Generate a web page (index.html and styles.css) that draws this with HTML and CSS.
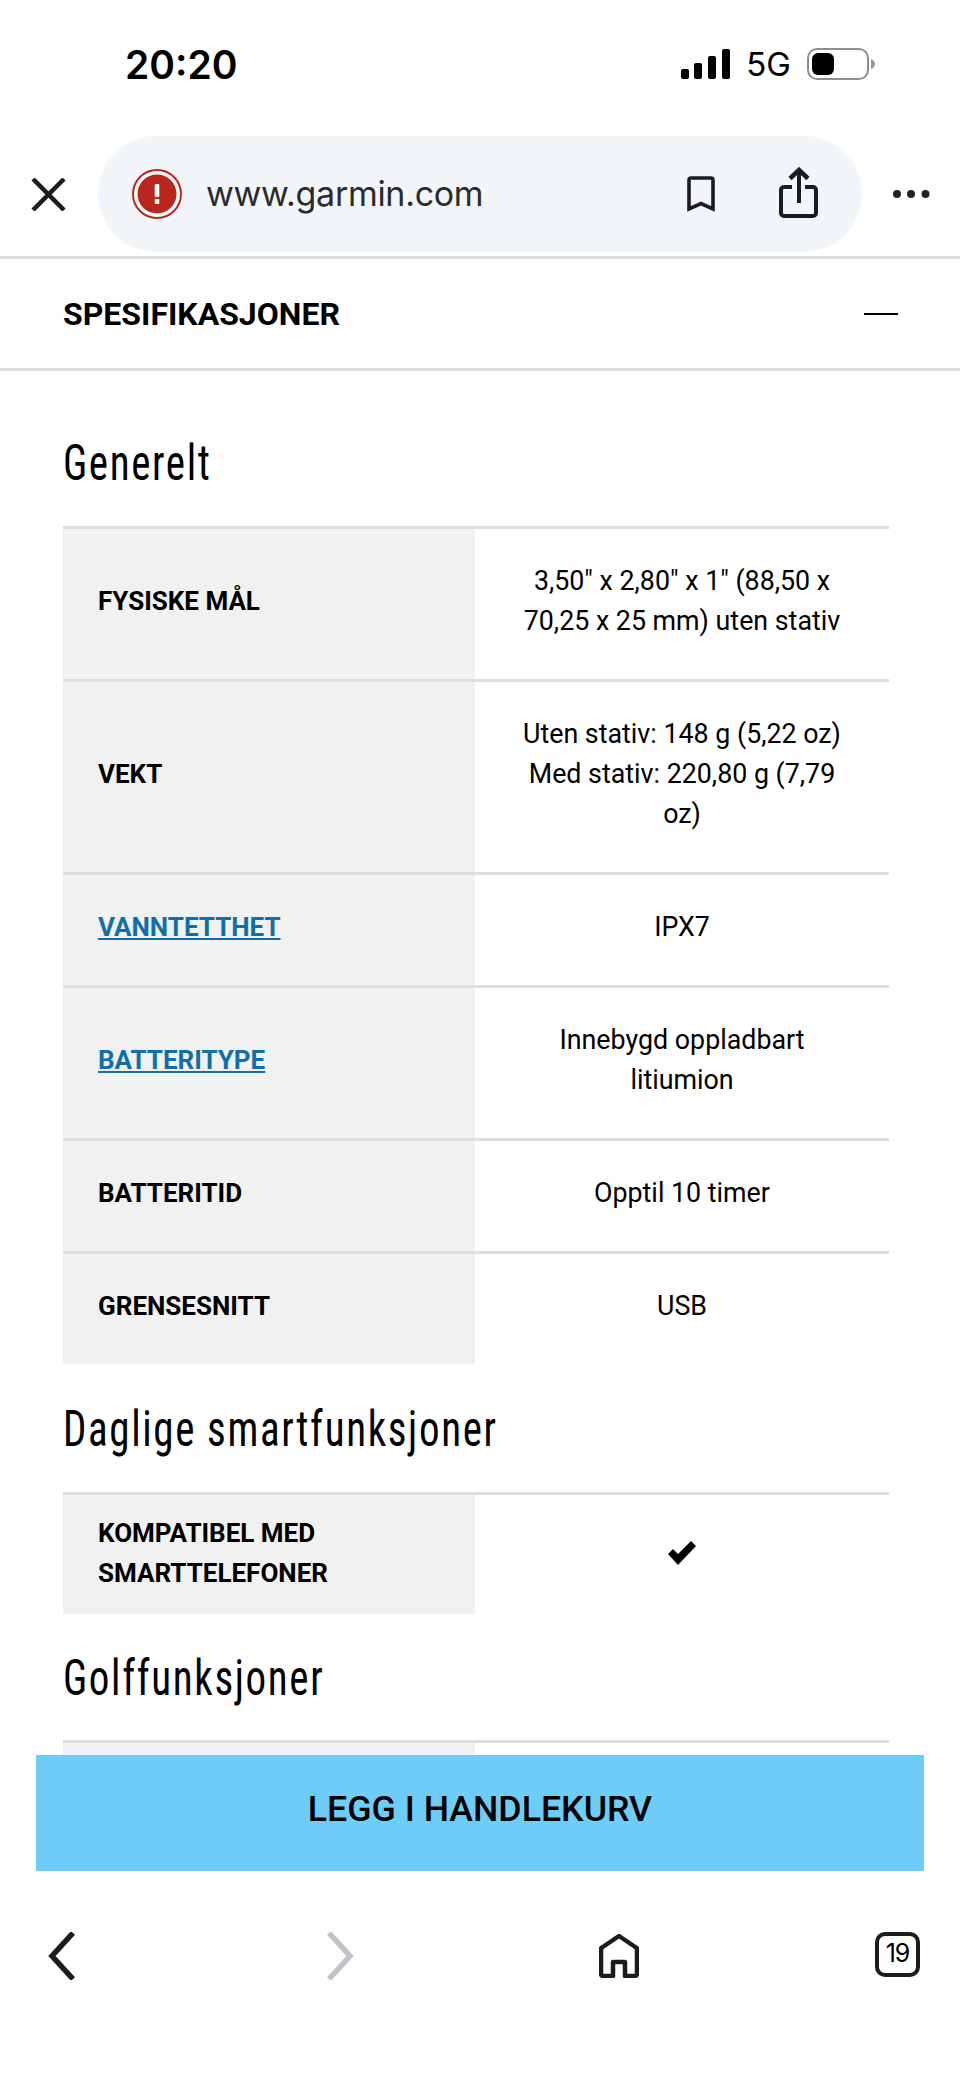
FILE: index.html
```html
<!DOCTYPE html>
<html lang="no">
<head>
    <meta charset="UTF-8">
    <meta name="viewport" content="width=device-width, initial-scale=1.0">
    <title>Spesifikasjoner</title>
    <link rel="stylesheet" href="styles.css">
</head>
<body>
    <div class="phone">
        <div class="status-bar">
            <span class="clock">20:20</span>
            <div class="status-icons">
                <svg class="signal" viewBox="0 0 49 30">
                    <rect x="0" y="20" width="8" height="10" rx="2"/>
                    <rect x="13" y="14" width="8" height="16" rx="2"/>
                    <rect x="27" y="7" width="8" height="23" rx="2"/>
                    <rect x="41" y="0" width="8" height="30" rx="2"/>
                </svg>
                <span class="network">5G</span>
                <svg class="battery" viewBox="0 0 68 32">
                    <rect x="1" y="1" width="60" height="30" rx="9" fill="none" stroke="#8e8e8e" stroke-width="2"/>
                    <rect x="5" y="5" width="22" height="22" rx="6" fill="#000"/>
                    <path d="M64 11c3 1 4 3 4 5s-1 4-4 5z" fill="#9a9a9a"/>
                </svg>
            </div>
        </div>

        <div class="toolbar">
            <svg class="close-icon" viewBox="0 0 35 33">
                <path d="M2 1l31 31M33 1L2 32" fill="none" stroke="#1c1c1e" stroke-width="4.5"/>
            </svg>
            <div class="url-pill">
                <svg class="warning-icon" viewBox="0 0 50 50">
                    <circle cx="25" cy="25" r="24" fill="#fff" stroke="#b9261e" stroke-width="2"/>
                    <circle cx="25" cy="25" r="19.5" fill="#b9261e"/>
                    <rect x="22.7" y="15" width="4.6" height="13" rx="1.2" fill="#fff"/>
                    <rect x="22.7" y="30" width="4.6" height="5" rx="1" fill="#fff"/>
                </svg>
                <span class="url-text">www.garmin.com</span>
                <svg class="bookmark-icon" viewBox="0 0 28 36">
                    <path d="M4 2h20a2 2 0 0 1 2 2v29l-12-5.500L2 33V4a2 2 0 0 1 2-2z" fill="none" stroke="#1c1c1e" stroke-width="3.600"/>
                </svg>
                <svg class="share-icon" viewBox="0 0 40 52">
                    <path d="M13 20H5a3 3 0 0 0-3 3v23a3 3 0 0 0 3 3h29a3 3 0 0 0 3-3V23a3 3 0 0 0-3-3h-8" fill="none" stroke="#1c1c1e" stroke-width="4"/>
                    <path d="M20 4v32" stroke="#1c1c1e" stroke-width="4"/>
                    <path d="M11 11.500l9-8.500 9 8.500" fill="none" stroke="#1c1c1e" stroke-width="4.500"/>
                </svg>
            </div>
            <svg class="more-icon" viewBox="0 0 38 10">
                <circle cx="5" cy="5" r="4" fill="#222"/>
                <circle cx="19" cy="5" r="4" fill="#222"/>
                <circle cx="33.500" cy="5" r="4" fill="#222"/>
            </svg>
        </div>

        <div class="content">
            <div class="accordion-head">
                <span>SPESIFIKASJONER</span>
                <span class="minus"></span>
            </div>

            <div class="specs">
                <h2 class="specs-title first">Generelt</h2>
                <table class="spec-table">
                    <tr>
                        <th>FYSISKE MÅL</th>
                        <td>3,50" x 2,80" x 1" (88,50 x 70,25 x 25 mm) uten stativ</td>
                    </tr>
                    <tr>
                        <th>VEKT</th>
                        <td>Uten stativ: 148 g (5,22 oz)<br>Med stativ: 220,80 g (7,79 oz)</td>
                    </tr>
                    <tr>
                        <th><a href="#">VANNTETTHET</a></th>
                        <td>IPX7</td>
                    </tr>
                    <tr>
                        <th><a href="#">BATTERITYPE</a></th>
                        <td>Innebygd oppladbart litiumion</td>
                    </tr>
                    <tr>
                        <th>BATTERITID</th>
                        <td>Opptil 10 timer</td>
                    </tr>
                    <tr>
                        <th>GRENSESNITT</th>
                        <td>USB</td>
                    </tr>
                </table>

                <h2 class="specs-title">Daglige smartfunksjoner</h2>
                <table class="spec-table compact">
                    <tr>
                        <th>KOMPATIBEL MED SMARTTELEFONER</th>
                        <td>
                            <svg class="check" viewBox="0 0 28 24">
                                <path d="M0 13l5-5 5 5L23 0l5 5-18 19z"/>
                            </svg>
                        </td>
                    </tr>
                </table>

                <h2 class="specs-title last">Golffunksjoner</h2>
                <table class="spec-table">
                    <tr>
                        <th>&nbsp;</th>
                        <td>&nbsp;</td>
                    </tr>
                </table>
            </div>

            <button class="cart-button">LEGG I HANDLEKURV</button>
        </div>

        <div class="bottom-nav">
            <svg class="nav-arrow" viewBox="0 0 28 48">
                <path d="M25 1L4 24l21 23" fill="none" stroke="#1c1c1e" stroke-width="5.500"/>
            </svg>
            <svg class="nav-arrow forward" viewBox="0 0 28 48">
                <path d="M3 1l21 23L3 47" fill="none" stroke="#c2c3c8" stroke-width="5.500"/>
            </svg>
            <svg class="home-icon" viewBox="0 0 40 44">
                <path d="M20 2L3 13.500a2 2 0 0 0-1 2V40a2 2 0 0 0 2 2h10V28h12v14h10a2 2 0 0 0 2-2V15.500a2 2 0 0 0-1-2z" fill="none" stroke="#1c1c1e" stroke-width="4.500" stroke-linejoin="round"/>
            </svg>
            <div class="tab-count">19</div>
        </div>
    </div>
</body>
</html>
```

FILE: styles.css
```css
html, body {
    margin: 0;
    padding: 0;
    background-color: #ffffff;
}

body {
    font-family: Roboto, Arial, sans-serif;
    color: #000000;
}

.phone {
    width: 960px;
    height: 2081px;
    display: flex;
    flex-direction: column;
    overflow: hidden;
}

/* Barra de estado */
.status-bar {
    height: 136px;
    flex-shrink: 0;
    display: flex;
    justify-content: space-between;
    padding: 46px 85px 0 125px;
    box-sizing: border-box;
}

.clock {
    font-family: Inter, sans-serif;
    font-size: 39px;
    font-weight: 600;
    line-height: 38px;
}

.status-icons {
    display: flex;
    align-items: flex-start;
}

.signal {
    width: 49px;
    height: 30px;
    margin-top: 3px;
}

.network {
    font-family: Inter, sans-serif;
    font-size: 33px;
    line-height: 36px;
    margin: 0 16px 0 16px;
}

.battery {
    width: 68px;
    height: 32px;
    margin-top: 2px;
}

/* Barra del navegador */
.toolbar {
    height: 120px;
    flex-shrink: 0;
    display: flex;
    align-items: flex-start;
    border-bottom: 3px solid #dedede;
}

.close-icon {
    width: 35px;
    height: 33px;
    margin: 42px 32px 0 31px;
}

.url-pill {
    width: 764px;
    height: 116px;
    background-color: #f3f6f8;
    border-radius: 58px;
    display: flex;
    align-items: center;
    padding-left: 34px;
    box-sizing: border-box;
}

.warning-icon {
    width: 50px;
    height: 50px;
    margin-right: 24px;
}

.url-text {
    font-family: Inter, sans-serif;
    font-size: 34px;
    letter-spacing: -0.3px;
    color: #2b2b2d;
    width: 481px;
    padding-bottom: 2px;
}

.bookmark-icon {
    width: 28px;
    height: 36px;
    margin-right: 64px;
}

.share-icon {
    width: 40px;
    height: 52px;
    margin-top: -2px;
}

.more-icon {
    width: 38px;
    height: 10px;
    margin: 53px 0 0 30px;
}

/* Contenido */
.content {
    flex: 1;
    position: relative;
    overflow: hidden;
}

.accordion-head {
    height: 109px;
    border-bottom: 3px solid #dedede;
    display: flex;
    justify-content: space-between;
    align-items: center;
    padding: 0 62px 0 63px;
    font-size: 32px;
    font-weight: 700;
}

.minus {
    width: 34px;
    height: 2px;
    background-color: #000000;
}

.specs {
    padding: 0 71px 0 63px;
}

.specs-title {
    font-family: Roboto, sans-serif;
    font-stretch: 75%;
    font-weight: 400;
    font-size: 50px;
    letter-spacing: 2px;
    line-height: 60px;
    margin: 0;
    padding: 35px 0 33px;
    transform: scaleX(0.82);
    transform-origin: left center;
}

.specs-title.first {
    padding: 62px 0 33px;
}

.specs-title.last {
    padding: 34px 0 32px;
}

.spec-table {
    width: 826px;
    border-collapse: collapse;
    table-layout: fixed;
    font-size: 26.8px;
    line-height: 40px;
}

.spec-table th,
.spec-table td {
    border-top: 3px solid #dedede;
    padding: 32px 36px 38px;
    vertical-align: middle;
    box-sizing: border-box;
}

.spec-table th {
    width: 412px;
    background-color: #f1f1f1;
    padding-left: 35px;
    font-size: 26px;
    font-weight: 700;
    text-align: left;
}

.spec-table td {
    text-align: center;
}

.spec-table a {
    color: #106fa8;
}

.spec-table.compact th,
.spec-table.compact td {
    padding-top: 18px;
    padding-bottom: 21px;
}

.check {
    width: 28px;
    height: 24px;
    display: block;
    margin: 0 auto;
}

/* Boton flotante sobre la tabla */
.cart-button {
    position: absolute;
    left: 36px;
    top: 1496px;
    width: 888px;
    height: 116px;
    padding: 0 0 8px;
    background-color: #6dcdf7;
    border: none;
    border-radius: 0;
    font-family: Roboto, Arial, sans-serif;
    font-size: 35.7px;
    font-weight: 500;
    color: #000000;
}

/* Navegacion inferior */
.bottom-nav {
    height: 181px;
    flex-shrink: 0;
    background-color: #fefefe;
    display: flex;
    align-items: flex-start;
    padding: 32px 0 0 48px;
    box-sizing: border-box;
}

.nav-arrow {
    width: 28px;
    height: 48px;
}

.nav-arrow.forward {
    margin-left: 250px;
}

.home-icon {
    width: 40px;
    height: 44px;
    margin: 2px 0 0 245px;
}

.tab-count {
    width: 45px;
    height: 45px;
    margin-left: 236px;
    border: 4.5px solid #1c1c1e;
    border-radius: 10px;
    box-sizing: border-box;
    font-family: Inter, sans-serif;
    font-size: 25px;
    line-height: 35px;
    text-align: center;
    letter-spacing: -1px;
}
```
